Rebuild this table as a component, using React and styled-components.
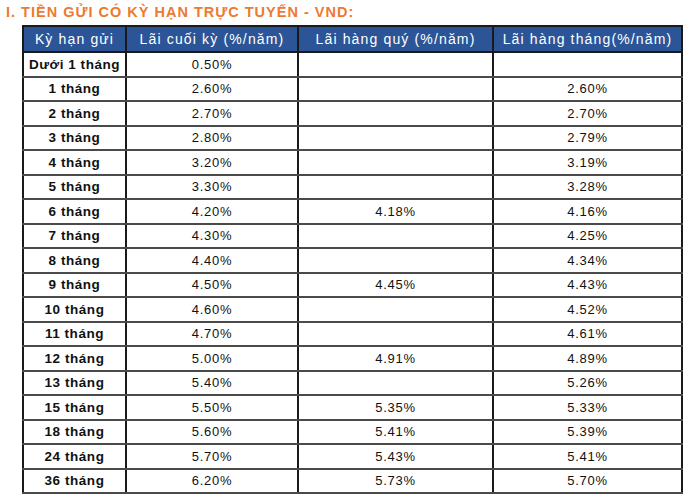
import styled, { createGlobalStyle } from 'styled-components';

const rows = [
    ['Dưới 1 tháng', '0.50%', '', ''],
    ['1 tháng', '2.60%', '', '2.60%'],
    ['2 tháng', '2.70%', '', '2.70%'],
    ['3 tháng', '2.80%', '', '2.79%'],
    ['4 tháng', '3.20%', '', '3.19%'],
    ['5 tháng', '3.30%', '', '3.28%'],
    ['6 tháng', '4.20%', '4.18%', '4.16%'],
    ['7 tháng', '4.30%', '', '4.25%'],
    ['8 tháng', '4.40%', '', '4.34%'],
    ['9 tháng', '4.50%', '4.45%', '4.43%'],
    ['10 tháng', '4.60%', '', '4.52%'],
    ['11 tháng', '4.70%', '', '4.61%'],
    ['12 tháng', '5.00%', '4.91%', '4.89%'],
    ['13 tháng', '5.40%', '', '5.26%'],
    ['15 tháng', '5.50%', '5.35%', '5.33%'],
    ['18 tháng', '5.60%', '5.41%', '5.39%'],
    ['24 tháng', '5.70%', '5.43%', '5.41%'],
    ['36 tháng', '6.20%', '5.73%', '5.70%'],
];

const headers = ['Kỳ hạn gửi', 'Lãi cuối kỳ (%/năm)', 'Lãi hàng quý (%/năm)', 'Lãi hàng tháng(%/năm)'];
const widths = [103, 172, 195, 189];

export default function App() {
    return (
        <Page>
            <GlobalStyle />
            <Title>I. TIỀN GỬI CÓ KỲ HẠN TRỰC TUYẾN - VND:</Title>
            <RateTable>
                <colgroup>
                    {widths.map((w, i) => <col key={i} style={{ width: w }} />)}
                </colgroup>
                <thead>
                    <tr>
                        {headers.map((h) => <HeadCell key={h}>{h}</HeadCell>)}
                    </tr>
                </thead>
                <tbody>
                    {rows.map((row) => (
                        <tr key={row[0]}>
                            {row.map((value, i) => (
                                <Cell key={i} $term={i === 0}>{value}</Cell>
                            ))}
                        </tr>
                    ))}
                </tbody>
            </RateTable>
        </Page>
    );
}

const GlobalStyle = createGlobalStyle`
    body {
        margin: 0;
        background: #ffffff;
        font-family: 'Liberation Sans', Arial, sans-serif;
    }
`;

const Page = styled.div`
    width: 700px;
    height: 504px;
    box-sizing: border-box;
    padding: 4px 0 0 6px;
    background: #ffffff;
    overflow: hidden;
`;

const Title = styled.div`
    font-family: 'Liberation Sans', Arial, sans-serif;
    font-weight: 700;
    font-size: 14.5px;
    line-height: 16px;
    letter-spacing: 1px;
    color: #ee7a2f;
    margin-bottom: 5px;
`;

const RateTable = styled.table`
    margin-left: 16px;
    width: 659px;
    table-layout: fixed;
    border-collapse: collapse;
    border: 2px solid #1a1a1a;
`;

const HeadCell = styled.th`
    height: 24px;
    padding: 0;
    background: #2b5597;
    color: #ffffff;
    font-weight: 400;
    font-size: 14px;
    letter-spacing: 1.15px;
    text-align: center;
    border-left: 2px solid #1a1a1a;
    border-right: 2px solid #1a1a1a;
    border-bottom: 2px solid #1a1a1a;
`;

const Cell = styled.td`
    height: 22.5px;
    padding: 0;
    text-align: center;
    white-space: nowrap;
    font-size: ${(p) => (p.$term ? '13.5px' : '13px')};
    letter-spacing: ${(p) => (p.$term ? '0.55px' : '0.7px')};
    font-weight: ${(p) => (p.$term ? 700 : 400)};
    color: #111111;
    border-left: 2px solid #1a1a1a;
    border-right: 2px solid #1a1a1a;
    border-bottom: 2px solid #4a4a4a;
`;
